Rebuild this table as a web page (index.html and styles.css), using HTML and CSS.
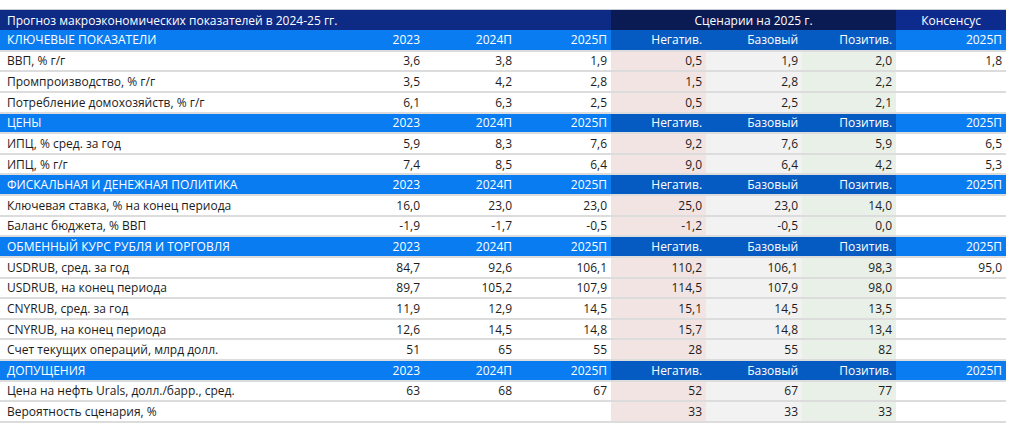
FILE: index.html
```html
<!DOCTYPE html>
<html lang="ru">
<head>
<meta charset="utf-8">
<title>Прогноз макроэкономических показателей</title>
<link rel="stylesheet" href="styles.css">
</head>
<body>
<div class="wrap">
<table class="fc">
  <colgroup>
    <col class="c-label"><col class="c-y"><col class="c-y2"><col class="c-y3">
    <col class="c-neg"><col class="c-base"><col class="c-pos"><col class="c-cons">
  </colgroup>
  <thead>
    <tr class="title">
      <th colspan="4" class="t-main">Прогноз макроэкономических показателей в 2024-25 гг.</th>
      <th colspan="3" class="t-scen">Сценарии на 2025 г.</th>
      <th class="t-cons">Консенсус</th>
    </tr>
  </thead>
  <tbody>
    <tr class="sec"><th>КЛЮЧЕВЫЕ ПОКАЗАТЕЛИ</th><td>2023</td><td>2024П</td><td>2025П</td><td class="s">Негатив.</td><td class="s">Базовый</td><td class="s">Позитив.</td><td>2025П</td></tr>
    <tr><th>ВВП, % г/г</th><td>3,6</td><td>3,8</td><td>1,9</td><td class="n">0,5</td><td class="b">1,9</td><td class="p">2,0</td><td>1,8</td></tr>
    <tr><th>Промпроизводство, % г/г</th><td>3,5</td><td>4,2</td><td>2,8</td><td class="n">1,5</td><td class="b">2,8</td><td class="p">2,2</td><td></td></tr>
    <tr><th>Потребление домохозяйств, % г/г</th><td>6,1</td><td>6,3</td><td>2,5</td><td class="n">0,5</td><td class="b">2,5</td><td class="p">2,1</td><td></td></tr>

    <tr class="sec"><th>ЦЕНЫ</th><td>2023</td><td>2024П</td><td>2025П</td><td class="s">Негатив.</td><td class="s">Базовый</td><td class="s">Позитив.</td><td>2025П</td></tr>
    <tr><th>ИПЦ, % сред. за год</th><td>5,9</td><td>8,3</td><td>7,6</td><td class="n">9,2</td><td class="b">7,6</td><td class="p">5,9</td><td>6,5</td></tr>
    <tr><th>ИПЦ, % г/г</th><td>7,4</td><td>8,5</td><td>6,4</td><td class="n">9,0</td><td class="b">6,4</td><td class="p">4,2</td><td>5,3</td></tr>

    <tr class="sec"><th>ФИСКАЛЬНАЯ И ДЕНЕЖНАЯ ПОЛИТИКА</th><td>2023</td><td>2024П</td><td>2025П</td><td class="s">Негатив.</td><td class="s">Базовый</td><td class="s">Позитив.</td><td>2025П</td></tr>
    <tr><th>Ключевая ставка, % на конец периода</th><td>16,0</td><td>23,0</td><td>23,0</td><td class="n">25,0</td><td class="b">23,0</td><td class="p">14,0</td><td></td></tr>
    <tr><th>Баланс бюджета, % ВВП</th><td>-1,9</td><td>-1,7</td><td>-0,5</td><td class="n">-1,2</td><td class="b">-0,5</td><td class="p">0,0</td><td></td></tr>

    <tr class="sec"><th>ОБМЕННЫЙ КУРС РУБЛЯ И ТОРГОВЛЯ</th><td>2023</td><td>2024П</td><td>2025П</td><td class="s">Негатив.</td><td class="s">Базовый</td><td class="s">Позитив.</td><td>2025П</td></tr>
    <tr><th>USDRUB, сред. за год</th><td>84,7</td><td>92,6</td><td>106,1</td><td class="n">110,2</td><td class="b">106,1</td><td class="p">98,3</td><td>95,0</td></tr>
    <tr><th>USDRUB, на конец периода</th><td>89,7</td><td>105,2</td><td>107,9</td><td class="n">114,5</td><td class="b">107,9</td><td class="p">98,0</td><td></td></tr>
    <tr><th>CNYRUB, сред. за год</th><td>11,9</td><td>12,9</td><td>14,5</td><td class="n">15,1</td><td class="b">14,5</td><td class="p">13,5</td><td></td></tr>
    <tr><th>CNYRUB, на конец периода</th><td>12,6</td><td>14,5</td><td>14,8</td><td class="n">15,7</td><td class="b">14,8</td><td class="p">13,4</td><td></td></tr>
    <tr><th>Счет текущих операций, млрд долл.</th><td>51</td><td>65</td><td>55</td><td class="n">28</td><td class="b">55</td><td class="p">82</td><td></td></tr>

    <tr class="sec"><th>ДОПУЩЕНИЯ</th><td>2023</td><td>2024П</td><td>2025П</td><td class="s">Негатив.</td><td class="s">Базовый</td><td class="s">Позитив.</td><td>2025П</td></tr>
    <tr><th>Цена на нефть Urals, долл./барр., сред.</th><td>63</td><td>68</td><td>67</td><td class="n">52</td><td class="b">67</td><td class="p">77</td><td></td></tr>
    <tr><th>Вероятность сценария, %</th><td></td><td></td><td></td><td class="n">33</td><td class="b">33</td><td class="p">33</td><td></td></tr>
  </tbody>
</table>
</div>
</body>
</html>
```

FILE: styles.css
```css
html, body {
  margin: 0;
  padding: 0;
  background: #ffffff;
}

.wrap {
  padding-top: 9px;
  width: 1006px;
}

.fc {
  width: 1006px;
  table-layout: fixed;
  border-collapse: collapse;
  font-family: "Open Sans", "Noto Sans", sans-serif;
  font-size: 12px;
  color: #1c1c1c;
  border-top: 1px solid #c9ccd6;
}

.c-label { width: 330px; }
.c-y { width: 94px; }
.c-y2 { width: 92px; }
.c-y3 { width: 95px; }
.c-neg { width: 95px; }
.c-base { width: 96px; }
.c-pos { width: 94px; }
.c-cons { width: 110px; }

.fc th, .fc td {
  padding: 0 4px 0 0;
  white-space: nowrap;
  overflow: hidden;
  font-weight: 400;
  text-align: right;
  vertical-align: middle;
}

.fc tbody th {
  text-align: left;
  padding-left: 7px;
}

.title th {
  height: 20px;
  color: #ffffff;
  padding: 0;
}

.title .t-main {
  background: #0d2a85;
  text-align: left;
  padding-left: 7px;
}

.title .t-scen {
  background: #0a1b54;
  text-align: center;
}

.title .t-cons {
  background: #0c2b8c;
  text-align: center;
}

.fc tbody tr {
  height: 20.63px;
}

.fc tbody th,
.fc tbody td {
  border-bottom: 2px solid #dcdcdc;
}

.sec th,
.sec td {
  background: #0a7cf2;
  color: #ffffff;
}

.sec th, .sec td {
  border-bottom-color: #d6e4f5;
}

.sec td.s {
  background: #055bc2;
}

td.n { background: #f3e4e4; }
td.b { background: #f2f2f2; }
td.p { background: #e9f0e7; }
```
